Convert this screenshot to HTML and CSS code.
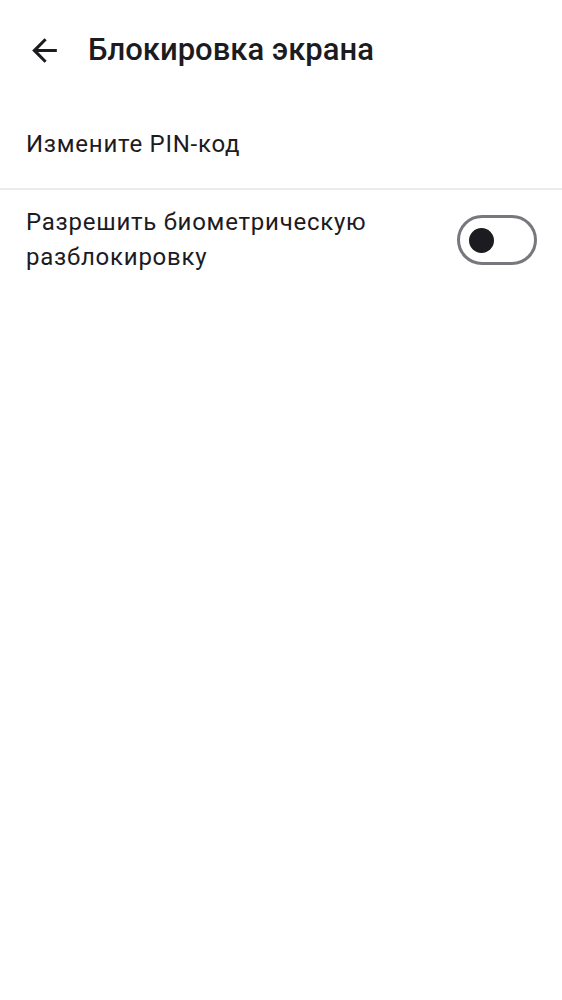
FILE: index.html
```html
<!DOCTYPE html>
<html lang="ru">
<head>
<meta charset="utf-8">
<link rel="stylesheet" href="styles.css">
</head>
<body>
<header class="topbar">
  <button class="back" aria-label="Назад">
    <svg width="37" height="37" viewBox="0 0 24 24"><path d="M20 11H7.83l5.59-5.59L12 4l-8 8 8 8 1.41-1.41L7.83 13H20v-2z" fill="#1c1b1f"/></svg>
  </button>
  <h1 class="title">Блокировка экрана</h1>
</header>
<main>
  <div class="row row-single">Измените PIN-код</div>
  <div class="divider"></div>
  <div class="row row-toggle">
    <div class="label">Разрешить биометрическую<br>разблокировку</div>
    <div class="switch"><div class="thumb"></div></div>
  </div>
</main>
</body>
</html>
```
FILE: styles.css
```css
html, body {
  margin: 0;
  padding: 0;
  background: #ffffff;
}
body {
  font-family: Roboto, "Noto Sans", sans-serif;
  color: #1c1b1f;
  width: 562px;
}
.topbar {
  height: 100px;
  display: flex;
  align-items: center;
}
.back {
  border: none;
  background: none;
  padding: 0;
  margin-left: 26px;
  width: 37px;
  height: 37px;
  display: flex;
}
.title {
  margin: 0 0 0 25px;
  font-size: 31px;
  font-weight: 500;
  line-height: 38px;
  letter-spacing: 0;
}
.row {
  padding: 0 25px 0 26px;
  font-size: 24px;
  letter-spacing: 0.75px;
  line-height: 35px;
}
.row-single {
  height: 88px;
  display: flex;
  align-items: center;
}
.divider {
  height: 2px;
  background: #e9ebee;
}
.row-toggle {
  display: flex;
  align-items: center;
  justify-content: space-between;
  padding-top: 15px;
  padding-bottom: 15px;
}
.switch {
  width: 80px;
  height: 50px;
  box-sizing: border-box;
  border: 3px solid #79767d;
  border-radius: 25px;
  display: flex;
  align-items: center;
  padding-left: 9px;
}
.thumb {
  width: 25px;
  height: 25px;
  border-radius: 50%;
  background: #1c1b1f;
}
```
